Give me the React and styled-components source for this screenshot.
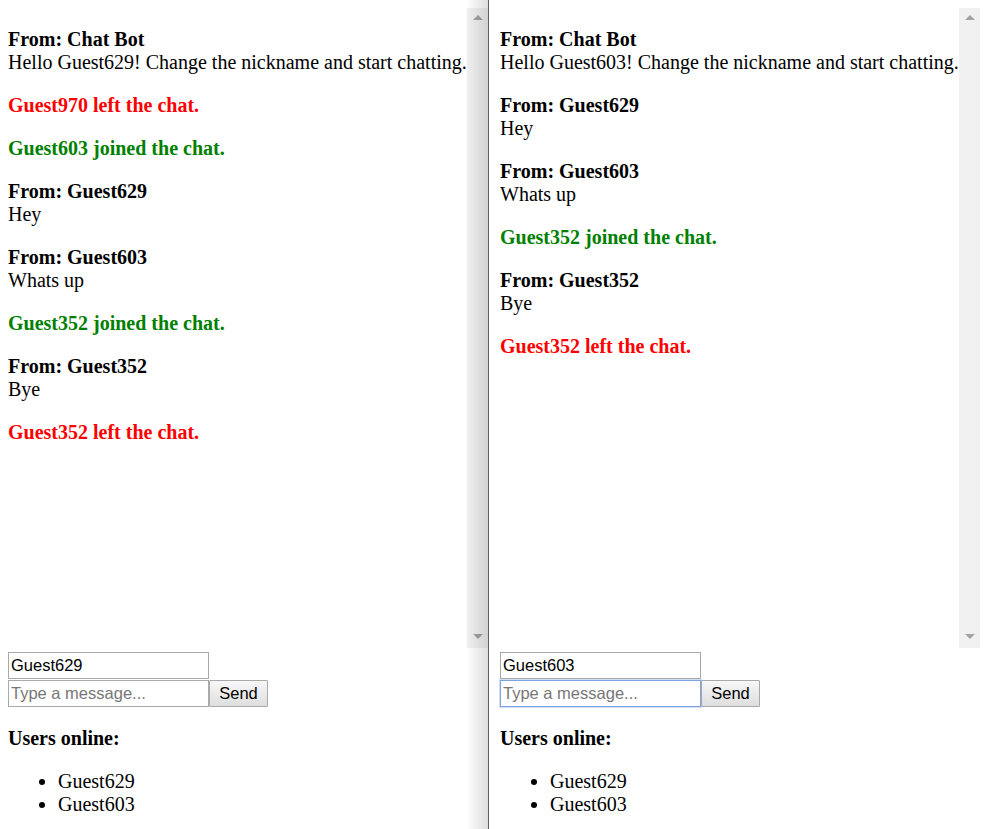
import React from 'react';
import styled, { createGlobalStyle } from 'styled-components';

const GlobalStyle = createGlobalStyle`
  html, body {
    margin: 0;
    padding: 0;
    background: #fff;
    overflow: hidden;
  }
  body {
    font-family: "Liberation Serif", "Times New Roman", serif;
    font-size: 20px;
    color: #000;
  }
`;

const Screen = styled.div`
  display: flex;
  height: 100vh;
  overflow: hidden;
`;

const Pane = styled.div`
  position: relative;
  width: ${(p) => p.$width}px;
  padding: 8px 0 0 ${(p) => p.$padLeft}px;
  box-sizing: border-box;
  flex-shrink: 0;

  &::after {
    content: ${(p) => (p.$shadow ? "''" : 'none')};
    position: absolute;
    top: 0;
    right: 0;
    bottom: 0;
    width: 22px;
    pointer-events: none;
    background: linear-gradient(to right, rgba(0, 0, 0, 0), rgba(0, 0, 0, 0.13));
  }
`;

const Divider = styled.div`
  width: 1px;
  flex-shrink: 0;
  background: #5e5e5e;
`;

const ChatLog = styled.div`
  display: flex;
  width: 480px;
  height: 640px;
  overflow: hidden;
`;

const LogBody = styled.div`
  flex: 1;
  min-width: 0;
  overflow: hidden;
`;

// classic scrollbar, content never overflows so there is no thumb
const ScrollTrack = styled.div`
  width: 21px;
  flex-shrink: 0;
  display: flex;
  flex-direction: column;
  justify-content: space-between;
  background: #f1f1f1;
`;

const ScrollButton = styled.div`
  height: 21px;
  display: flex;
  justify-content: center;
  align-items: ${(p) => (p.$dir === 'up' ? 'flex-start' : 'flex-end')};
  padding: ${(p) => (p.$dir === 'up' ? '7px 0 0' : '0 0 9px')};
  box-sizing: border-box;
`;

const Arrow = styled.span`
  width: 0;
  height: 0;
  border-left: 5px solid transparent;
  border-right: 5px solid transparent;
  ${(p) =>
    p.$dir === 'up'
      ? 'border-bottom: 5px solid #a3a3a3;'
      : 'border-top: 5px solid #a3a3a3;'}
`;

const Message = styled.p`
  margin: 20px 0;
  line-height: 23px;
  white-space: nowrap;
`;

const Notice = styled.p`
  margin: 20px 0;
  line-height: 23px;
  font-weight: bold;
  color: ${(p) => (p.$kind === 'left' ? '#ff0000' : '#008000')};
`;

const Controls = styled.div`
  display: flex;
  flex-direction: column;
  align-items: flex-start;
  gap: 1px;
  margin-top: 4px;
`;

const Row = styled.div`
  display: flex;
`;

const TextInput = styled.input`
  width: 201px;
  height: 27px;
  box-sizing: border-box;
  margin: 0;
  padding: 0 2px;
  border: 1px solid ${(p) => (p.$focused ? '#7ba4e3' : '#a9a9a9')};
  box-shadow: ${(p) => (p.$focused ? '0 0 0 1px rgba(123, 164, 227, 0.35)' : 'none')};
  font-family: "Liberation Sans", Arial, sans-serif;
  font-size: 16.5px;
  color: #000;
  background: #fff;
  outline: none;

  &::placeholder {
    color: #777;
  }
`;

const SendButton = styled.button`
  width: 59px;
  height: 27px;
  box-sizing: border-box;
  margin: 0;
  padding: 0;
  border: 1px solid #a9a9a9;
  border-radius: 1px;
  background: linear-gradient(#f7f7f7, #dedede);
  font-family: "Liberation Sans", Arial, sans-serif;
  font-size: 16.5px;
  color: #000;
`;

const UsersTitle = styled.h4`
  margin: 20px 0 0;
  font-size: 20px;
  line-height: 23px;
  font-weight: bold;
`;

const UserList = styled.ul`
  margin: 20px 0;
  padding-left: 50px;
  line-height: 23px;
`;

const ChatWindow = ({ me, log, users, focused }) => (
  <>
    <ChatLog>
      <LogBody>
        {log.map((item, i) =>
          item.type === 'msg' ? (
            <Message key={i}>
              <b>From: {item.from}</b>
              <br />
              {item.text}
            </Message>
          ) : (
            <Notice key={i} $kind={item.type}>
              {item.who} {item.type === 'left' ? 'left' : 'joined'} the chat.
            </Notice>
          )
        )}
      </LogBody>
      <ScrollTrack>
        <ScrollButton $dir="up">
          <Arrow $dir="up" />
        </ScrollButton>
        <ScrollButton $dir="down">
          <Arrow $dir="down" />
        </ScrollButton>
      </ScrollTrack>
    </ChatLog>
    <Controls>
      <TextInput defaultValue={me} />
      <Row>
        <TextInput placeholder="Type a message..." $focused={focused} />
        <SendButton>Send</SendButton>
      </Row>
    </Controls>
    <UsersTitle>Users online:</UsersTitle>
    <UserList>
      {users.map((u) => (
        <li key={u}>{u}</li>
      ))}
    </UserList>
  </>
);

const hello = (name) => `Hello ${name}! Change the nickname and start chatting.`;

const leftLog = [
  { type: 'msg', from: 'Chat Bot', text: hello('Guest629') },
  { type: 'left', who: 'Guest970' },
  { type: 'joined', who: 'Guest603' },
  { type: 'msg', from: 'Guest629', text: 'Hey' },
  { type: 'msg', from: 'Guest603', text: 'Whats up' },
  { type: 'joined', who: 'Guest352' },
  { type: 'msg', from: 'Guest352', text: 'Bye' },
  { type: 'left', who: 'Guest352' },
];

const rightLog = [
  { type: 'msg', from: 'Chat Bot', text: hello('Guest603') },
  { type: 'msg', from: 'Guest629', text: 'Hey' },
  { type: 'msg', from: 'Guest603', text: 'Whats up' },
  { type: 'joined', who: 'Guest352' },
  { type: 'msg', from: 'Guest352', text: 'Bye' },
  { type: 'left', who: 'Guest352' },
];

const users = ['Guest629', 'Guest603'];

export default function App() {
  return (
    <>
      <GlobalStyle />
      <Screen>
        <Pane $width={488} $padLeft={8} $shadow>
          <ChatWindow me="Guest629" log={leftLog} users={users} />
        </Pane>
        <Divider />
        <Pane $width={502} $padLeft={11}>
          <ChatWindow me="Guest603" log={rightLog} users={users} focused />
        </Pane>
      </Screen>
    </>
  );
}
